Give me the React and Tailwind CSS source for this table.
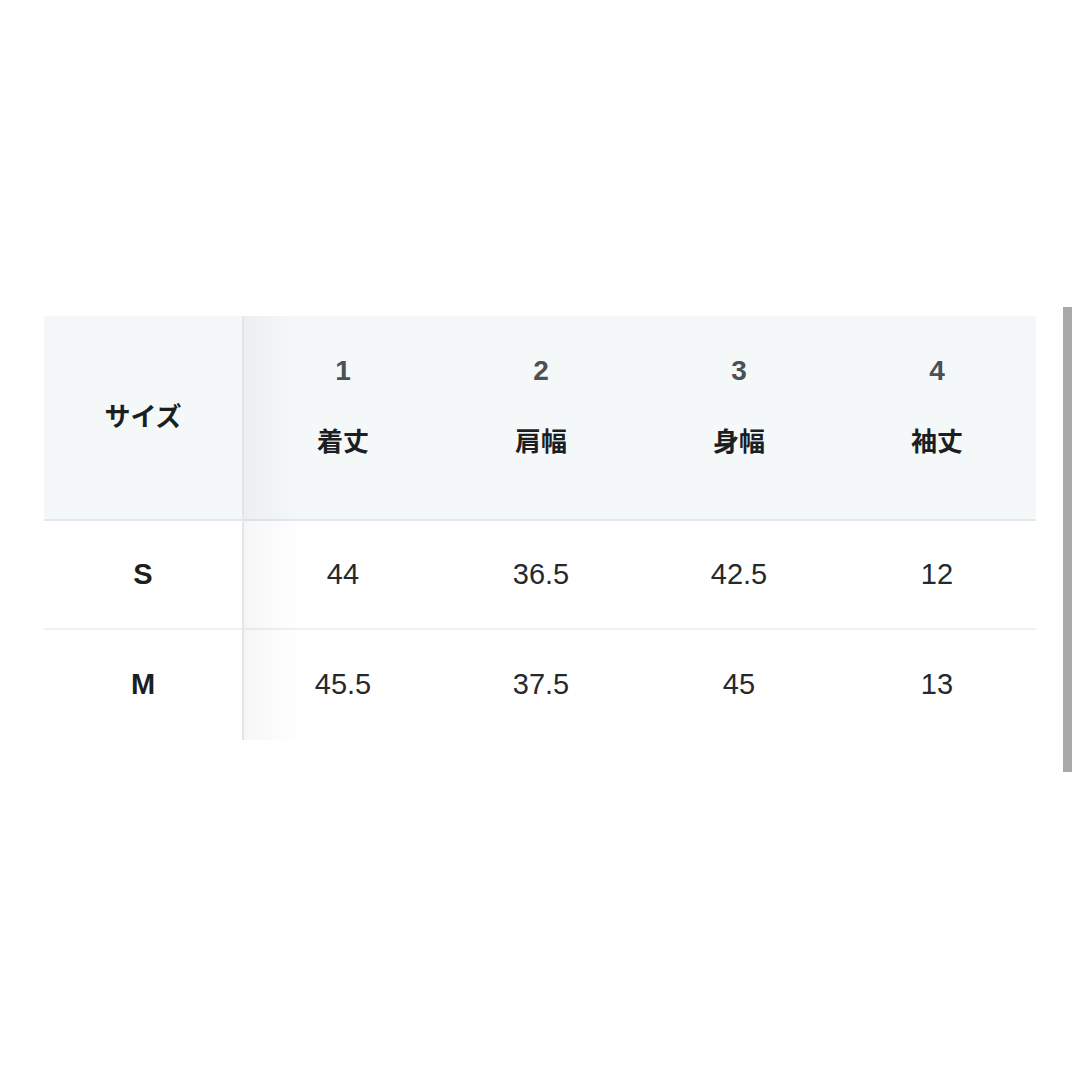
const columns = [
  { no: "1", label: "着丈" },
  { no: "2", label: "肩幅" },
  { no: "3", label: "身幅" },
  { no: "4", label: "袖丈" },
];

const rows = [
  { size: "S", values: ["44", "36.5", "42.5", "12"], h: "h-[109px]", border: true },
  { size: "M", values: ["45.5", "37.5", "45", "13"], h: "h-[110px]", border: false },
];

const font = { fontFamily: '"Liberation Sans", "Noto Sans CJK JP", sans-serif' };

export default function App() {
  return (
    <div
      className="min-h-screen bg-white pt-[307px] pl-[44px] flex items-start"
      style={font}
    >
      <div className="mt-[9px] w-[992px] flex">
        {/* sticky size column */}
        <div className="w-[200px] shrink-0 border-r-2 border-[#e3e6e9]">
          <div className="h-[205px] bg-[#f5f8f9] border-b-2 border-[#e4e7ea] flex items-center justify-center">
            <span className="text-[26px] font-bold text-[#1c1f22]">サイズ</span>
          </div>
          {rows.map((r) => (
            <div
              key={r.size}
              className={`${r.h} flex items-center justify-center ${
                r.border ? "border-b-2 border-[#eef1f3]" : ""
              }`}
            >
              <span className="text-[29px] font-bold text-[#1c1f22]">{r.size}</span>
            </div>
          ))}
        </div>

        {/* data columns */}
        <div className="relative flex-1">
          <div className="h-[205px] bg-[#f5f8f9] border-b-2 border-[#e4e7ea] flex">
            {columns.map((c) => (
              <div key={c.no} className="flex-1 flex flex-col items-center pt-[38px]">
                <div className="h-[34px] leading-[34px] text-[28px] font-semibold text-[#4a5055]">
                  {c.no}
                </div>
                <div className="mt-[37px] h-[34px] leading-[34px] text-[26px] font-bold text-[#1c1f22]">
                  {c.label}
                </div>
              </div>
            ))}
          </div>
          {rows.map((r) => (
            <div
              key={r.size}
              className={`${r.h} flex ${r.border ? "border-b-2 border-[#eef1f3]" : ""}`}
            >
              {r.values.map((v, i) => (
                <div
                  key={i}
                  className="flex-1 flex items-center justify-center text-[29px] text-[#25292d]"
                >
                  {v}
                </div>
              ))}
            </div>
          ))}
          <div className="absolute inset-y-0 left-0 w-[56px] bg-gradient-to-r from-black/[0.035] to-transparent pointer-events-none" />
        </div>
      </div>

      {/* scrollbar */}
      <div className="ml-[27px] w-[9px] h-[465px] bg-[#a9a9a9]" />
    </div>
  );
}
